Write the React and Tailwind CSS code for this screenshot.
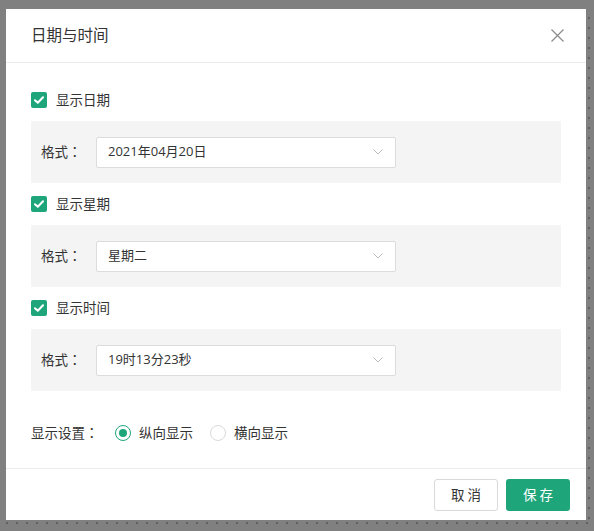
import { useState } from 'react'

const FONT = { fontFamily: '"Open Sans", "Noto Sans CJK SC", sans-serif' }

const dateFormats = ['2021年04月20日', '2021-04-20', '2021/04/20']
const weekFormats = ['星期二', '周二', 'Tue']
const timeFormats = ['19时13分23秒', '19:13:23', '19:13']

// full-width colon, centred the way the original UI font draws it
function Colon() {
  return <span className="font-['Noto_Sans_CJK_JP',sans-serif]">：</span>
}

function Checkbox({ checked, onChange, label }) {
  return (
    <label className="flex items-center h-[42px] cursor-pointer select-none" onClick={onChange}>
      <span
        className={`w-4 h-4 rounded-[2px] flex items-center justify-center ${
          checked ? 'bg-[#1ea67a]' : 'bg-white border border-[#d9d9d9]'
        }`}
      >
        {checked && (
          <svg width="10" height="8" viewBox="0 0 10 8" fill="none">
            <path d="M1 4.2 L3.8 6.8 L9 1.3" stroke="white" strokeWidth="2" strokeLinecap="round" strokeLinejoin="round" />
          </svg>
        )}
      </span>
      <span className="ml-[9px] text-[13.5px] text-[#333]">{label}</span>
    </label>
  )
}

function FormatBox({ value }) {
  return (
    <div className="bg-[#f4f4f4] h-[62px] flex items-center pl-[10px]">
      <span className="w-[55px] text-[13.5px] text-[#333]">格式<Colon /></span>
      <div className="w-[300px] h-[31px] bg-white border border-[#dcdcdc] rounded-[2px] flex items-center justify-between pl-[11px] pr-[12px]">
        <span className="text-[13px] text-[#333]">{value}</span>
        <svg width="10" height="6" viewBox="0 0 10 6" fill="none">
          <path d="M0.5 0.5 L5 5 L9.5 0.5" stroke="#bdbdbd" strokeWidth="1" />
        </svg>
      </div>
    </div>
  )
}

function Radio({ checked, label, onClick }) {
  return (
    <label className="flex items-center cursor-pointer" onClick={onClick}>
      <span
        className={`w-4 h-4 rounded-full border flex items-center justify-center ${
          checked ? 'border-[#1ea67a]' : 'border-[#d9d9d9]'
        }`}
      >
        {checked && <span className="w-2 h-2 rounded-full bg-[#1ea67a]" />}
      </span>
      <span className="ml-[8px] text-[13.5px] text-[#333]">{label}</span>
    </label>
  )
}

export default function App() {
  const [showDate, setShowDate] = useState(true)
  const [showWeek, setShowWeek] = useState(true)
  const [showTime, setShowTime] = useState(true)
  const [layout, setLayout] = useState('vertical')

  return (
    <div className="w-[594px] h-[531px] bg-[#808080] pt-[9px] flex flex-col" style={FONT}>
      <div className="flex pl-[6px]">
        <div className="w-[580px] h-[511px] bg-white flex flex-col">
          {/* header */}
          <div className="h-[54px] border-b border-[#ececec] flex items-center justify-between pl-[25px] pr-[22px]">
            <h1 className="text-[15.5px] text-[#333]">日期与时间</h1>
            <button className="w-[14px] h-[14px] flex items-center justify-center">
              <svg width="13" height="13" viewBox="0 0 13 13" fill="none">
                <path d="M0.5 0.5 L12.5 12.5 M12.5 0.5 L0.5 12.5" stroke="#8c8c8c" strokeWidth="1.3" />
              </svg>
            </button>
          </div>

          {/* body */}
          <div className="flex-1 px-[25px] pt-[16px]">
            <Checkbox checked={showDate} onChange={() => setShowDate(!showDate)} label="显示日期" />
            <FormatBox value={dateFormats[0]} />
            <Checkbox checked={showWeek} onChange={() => setShowWeek(!showWeek)} label="显示星期" />
            <FormatBox value={weekFormats[0]} />
            <Checkbox checked={showTime} onChange={() => setShowTime(!showTime)} label="显示时间" />
            <FormatBox value={timeFormats[0]} />

            <div className="flex items-center h-[36px] mt-[24px]">
              <span className="text-[13.5px] text-[#333] w-[84px]">显示设置<Colon /></span>
              <Radio checked={layout === 'vertical'} label="纵向显示" onClick={() => setLayout('vertical')} />
              <div className="ml-[17px]">
                <Radio checked={layout === 'horizontal'} label="横向显示" onClick={() => setLayout('horizontal')} />
              </div>
            </div>
          </div>

          {/* footer */}
          <div className="h-[52px] border-t border-[#ececec] flex items-start justify-end gap-[8px] pt-[10px] pr-[16px]">
            <button className="w-[64px] h-[32px] border border-[#d9d9d9] rounded-[3px] bg-white text-[13.5px] text-[#333] tracking-[3px] pl-[3px]">
              取消
            </button>
            <button className="w-[64px] h-[32px] rounded-[3px] bg-[#1ea67a] text-[13.5px] text-white tracking-[3px] pl-[3px]">
              保存
            </button>
          </div>
        </div>
        {/* dotted strip right */}
        <div className="w-[8px] h-[511px] bg-[radial-gradient(#606060_1.2px,transparent_1.4px)] bg-[size:10px_10px] bg-[position:-2px_4px]" />
      </div>
      {/* dotted strip bottom */}
      <div className="flex-1 bg-[radial-gradient(#606060_1.2px,transparent_1.4px)] bg-[size:10px_10px] bg-[position:2px_-2px]" />
    </div>
  )
}
